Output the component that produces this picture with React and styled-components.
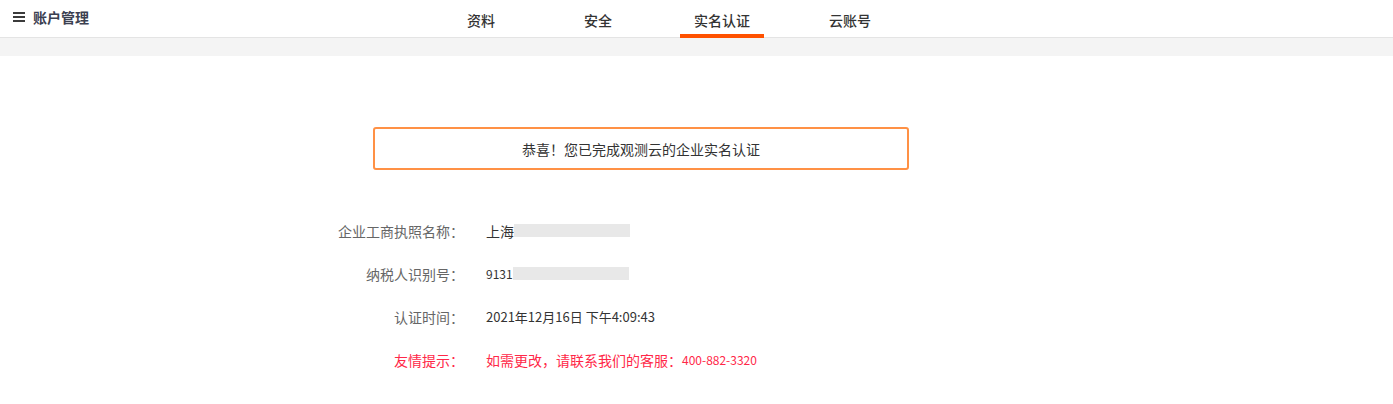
import React from "react";
import styled, { createGlobalStyle } from "styled-components";

const Global = createGlobalStyle`
  html, body { margin: 0; padding: 0; background: #fff; }
  body { font-family: "Noto Sans CJK SC", "Noto Sans", sans-serif; color: #333; }
  * { box-sizing: border-box; }
`;

const Page = styled.div`
  width: 1393px;
  min-height: 404px;
  background: #fff;
`;

const Header = styled.header`
  height: 38px;
  display: flex;
  align-items: stretch;
  border-bottom: 1px solid #e4e4e4;
  background: #fff;
`;

const Title = styled.div`
  display: flex;
  align-items: center;
  gap: 8px;
  padding: 0 0 3px 13px;
  width: 453px;
  font-size: 14px;
  font-weight: 700;
  color: #3b4050;
`;

const MenuIcon = styled.span`
  display: flex;
  flex-direction: column;
  gap: 2px;
  width: 12px;
  & > i {
    display: block;
    height: 2px;
    background: #3b3b3b;
  }
`;

const Tabs = styled.nav`
  display: flex;
  align-items: stretch;
`;

const Tab = styled.div`
  position: relative;
  display: flex;
  align-items: center;
  padding: 3px 14px 0 14px;
  margin-left: ${(p) => p.$offset || 0}px;
  font-size: 14px;
  font-weight: 500;
  color: #333;
  &::after {
    content: "";
    position: absolute;
    left: 0;
    right: 0;
    bottom: -1px;
    height: 4px;
    background: ${(p) => (p.$active ? "#ff5100" : "transparent")};
  }
`;

const Band = styled.div`
  height: 18px;
  background: #f4f4f4;
`;

const Content = styled.main`
  padding: 71px 0 0 373px;
`;

const Notice = styled.div`
  width: 536px;
  height: 43px;
  border: 2px solid #ff9145;
  border-radius: 3px;
  display: flex;
  align-items: center;
  justify-content: center;
  font-size: 14px;
  color: #333;
`;

const Info = styled.dl`
  margin: 39px 0 0 -53px;
  display: grid;
  grid-template-columns: 144px auto;
  column-gap: 22px;
  grid-auto-rows: 43px;
  align-items: center;
`;

const Label = styled.dt`
  margin: 0;
  text-align: right;
  font-size: 14px;
  color: ${(p) => (p.$warn ? "#ff2848" : "#666")};
`;

const Value = styled.dd`
  margin: 0;
  display: flex;
  align-items: center;
  font-size: ${(p) => p.$size || 14}px;
  color: ${(p) => (p.$warn ? "#ff2848" : "#333")};
`;

const Num = styled.span`
  font-size: 12px;
`;

const Masked = styled.span`
  display: inline-block;
  width: 116px;
  height: 13px;
  background: #e8e8e8;
`;

export default function App() {
  return (
    <Page>
      <Global />
      <Header>
        <Title>
          <MenuIcon>
            <i />
            <i />
            <i />
          </MenuIcon>
          账户管理
        </Title>
        <Tabs>
          <Tab>资料</Tab>
          <Tab $offset={61}>安全</Tab>
          <Tab $offset={54} $active>
            实名认证
          </Tab>
          <Tab $offset={51}>云账号</Tab>
        </Tabs>
      </Header>
      <Band />
      <Content>
        <Notice>恭喜！您已完成观测云的企业实名认证</Notice>
        <Info>
          <Label>企业工商执照名称：</Label>
          <Value>
            上海
            <Masked />
          </Value>
          <Label>纳税人识别号：</Label>
          <Value $size={12}>
            9131
            <Masked />
          </Value>
          <Label>认证时间：</Label>
          <Value $size={13}>2021年12月16日 下午4:09:43</Value>
          <Label $warn>友情提示：</Label>
          <Value $warn>
            如需更改，请联系我们的客服：<Num>400-882-3320</Num>
          </Value>
        </Info>
      </Content>
    </Page>
  );
}
